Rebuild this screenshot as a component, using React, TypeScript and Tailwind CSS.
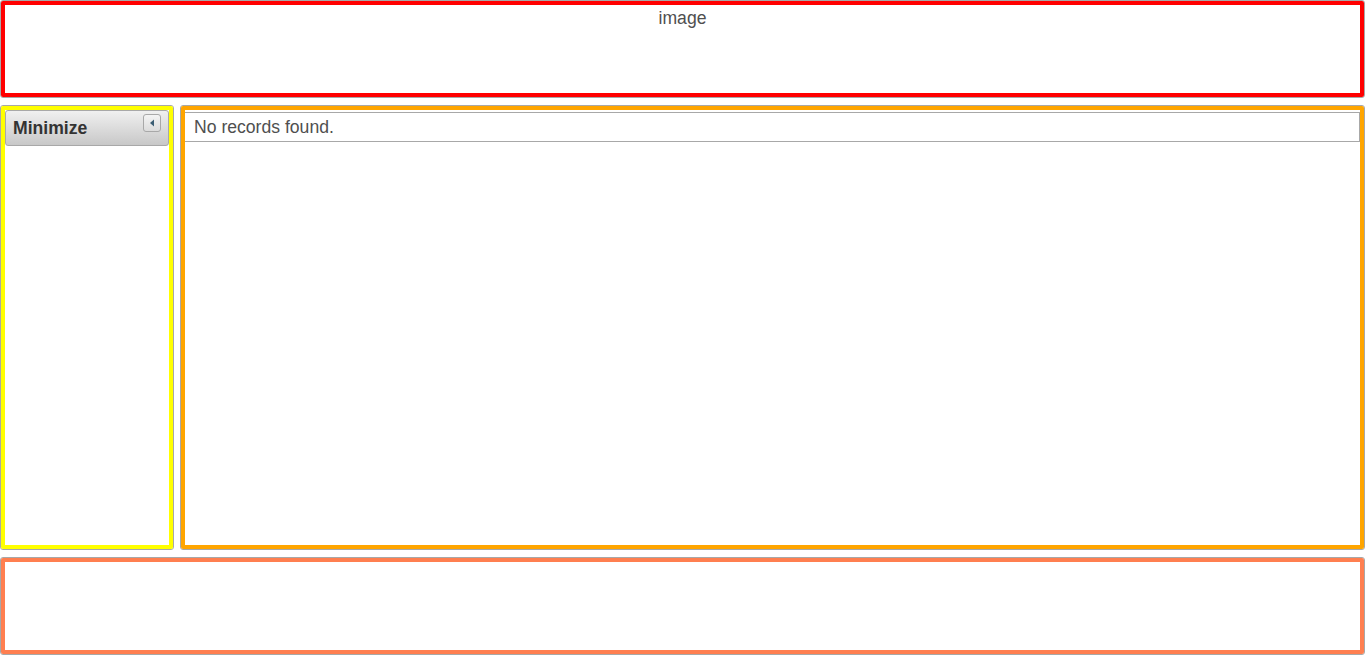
const unit = "border border-[#a8a8a8] rounded-[3px] bg-white overflow-hidden";

const App: React.FC = () => {
  return (
    <div className="h-[655px] w-[1365px] flex flex-col gap-[7px] bg-white font-['Liberation_Sans',Arial,sans-serif] text-[17.6px] text-[#4f4f4f]">
      {/* north */}
      <div className={`${unit} h-[98px] shrink-0`}>
        <div className="h-full border-4 border-[#ff0000] flex justify-center">
          <span>image</span>
        </div>
      </div>

      {/* middle */}
      <div className="h-[445px] shrink-0 flex gap-[6px]">
        <div className={`${unit} w-[174px] shrink-0`}>
          <div className="h-full border-4 border-[#ffff00]">
            <div className="h-[36px] flex items-start justify-between border border-[#a8a8a8] rounded-[3px] bg-gradient-to-b from-[#f0f0f0] to-[#c8c8c8] pl-[7px] pr-[7px]">
              <span className="font-bold text-[#333333] mt-[4px]">Minimize</span>
              <button className="mt-[3px] w-[18px] h-[18px] border border-[#a8a8a8] rounded-[3px] bg-gradient-to-b from-[#f4f4f4] to-[#dcdcdc] flex items-center justify-center">
                <svg width="6" height="8" viewBox="0 0 6 8">
                  <path d="M5 0.5 L1 4 L5 7.5 Z" fill="#3b5d73" />
                </svg>
              </button>
            </div>
          </div>
        </div>

        <div className={`${unit} flex-1`}>
          <div className="h-full border-4 border-[#ffa500] pt-[2px]">
            <div className="h-[30px] border border-[#a8a8a8] border-l-0 flex items-center pl-[9px]">
              No records found.
            </div>
          </div>
        </div>
      </div>

      {/* south */}
      <div className={`${unit} h-[98px] shrink-0`}>
        <div className="h-full border-4 border-[#ff7f50]" />
      </div>
    </div>
  );
};

export default App;
